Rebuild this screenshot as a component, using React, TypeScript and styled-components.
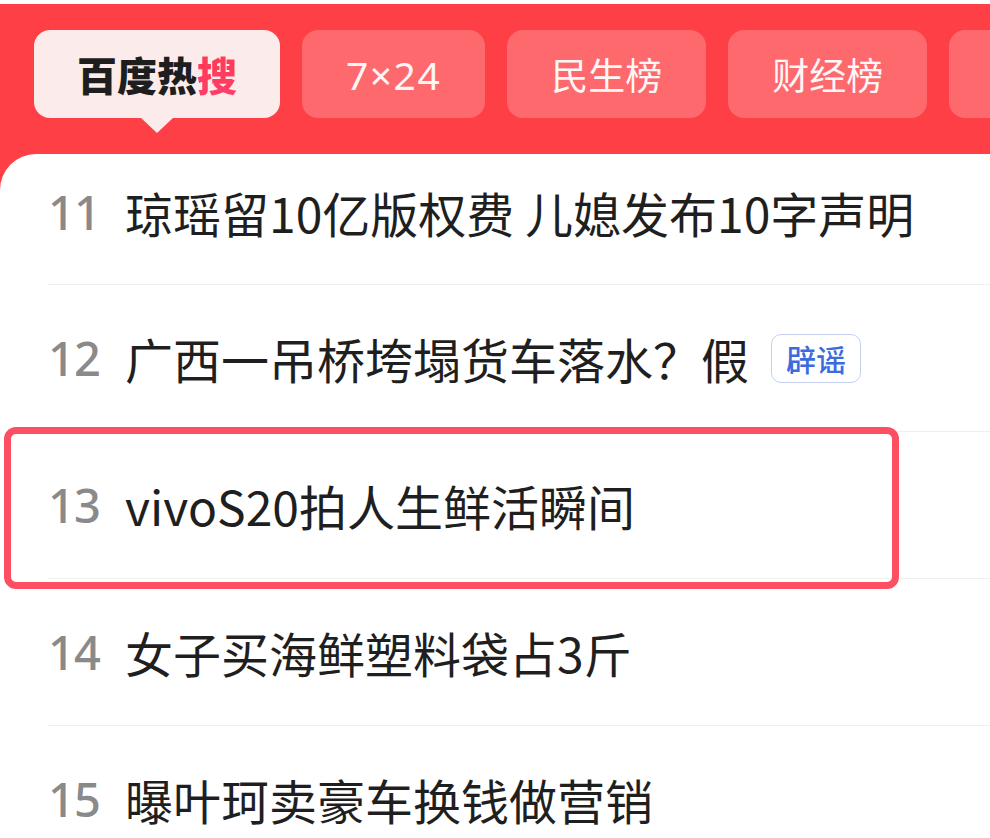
import React from 'react';
import styled, { createGlobalStyle } from 'styled-components';

const GlobalStyle = createGlobalStyle`
  html, body {
    margin: 0;
    padding: 0;
    background: #ffffff;
  }
  body {
    font-family: "Noto Sans CJK SC", "Noto Sans", sans-serif;
  }
`;

const Page = styled.div`
  width: 990px;
  height: 838px;
  padding-top: 4px;
  box-sizing: border-box;
  overflow: hidden;
  background: #ffffff;
`;

const Header = styled.div`
  background: #fe3f46;
  padding-top: 26px;
`;

const TabRow = styled.div`
  display: flex;
  gap: 22px;
  padding-left: 34px;
  height: 88px;
  white-space: nowrap;
`;

const Tab = styled.div<{ $active?: boolean; $blank?: boolean }>`
  position: relative;
  flex-shrink: 0;
  display: flex;
  align-items: center;
  justify-content: center;
  width: ${p => (p.$blank ? '200px' : 'auto')};
  padding: 0 ${p => (p.$active ? '43px' : '44px')};
  box-sizing: border-box;
  border-radius: 16px;
  background: ${p => (p.$active ? '#fcebeb' : 'rgba(255, 255, 255, 0.22)')};
  color: ${p => (p.$active ? '#1e1e1e' : '#fff6f6')};
  font-size: 37px;
  font-weight: ${p => (p.$active ? 900 : 400)};
  letter-spacing: 0;
`;

const Pointer = styled.div`
  position: absolute;
  left: 50%;
  bottom: -15px;
  width: 0;
  height: 0;
  transform: translateX(-50%);
  border-left: 17px solid transparent;
  border-right: 17px solid transparent;
  border-top: 16px solid #fcebeb;
`;

const Brand = styled.span`
  font-size: 40px;
`;

const Hot = styled.span`
  background: linear-gradient(180deg, #ff3b4a 0%, #ff3d6e 100%);
  -webkit-background-clip: text;
  background-clip: text;
  color: transparent;
`;

const Digits = styled.span`
  font-family: "Noto Sans", "Open Sans", sans-serif;
  font-size: 39px;
  letter-spacing: 1.5px;
`;

const Panel = styled.div`
  margin-top: 36px;
  background: #ffffff;
  border-top-left-radius: 36px;
`;

const List = styled.div`
  padding-left: 48px;
`;

const Row = styled.div<{ $first?: boolean }>`
  position: relative;
  display: flex;
  align-items: center;
  box-sizing: border-box;
  height: ${p => (p.$first ? '131px' : '147px')};
  padding-bottom: ${p => (p.$first ? '14px' : '0')};
  border-bottom: 1.5px solid #efefef;
`;

const Rank = styled.span`
  width: 77px;
  flex-shrink: 0;
  font-family: "Noto Sans", "Open Sans", sans-serif;
  font-size: 47px;
  font-weight: 500;
  color: #8a8a8a;
  letter-spacing: -1px;
`;

const Title = styled.span`
  font-size: 48px;
  color: #1f1f1f;
  white-space: pre;
`;

const Tag = styled.span`
  margin-left: 22px;
  display: inline-flex;
  align-items: center;
  justify-content: center;
  height: 49px;
  box-sizing: border-box;
  padding: 0 14px;
  border: 1.5px solid #c3d1ee;
  border-radius: 10px;
  color: #3c6be0;
  font-size: 30px;
  font-weight: 500;
`;

const Highlight = styled.div`
  position: absolute;
  top: -5px;
  left: -44px;
  width: 895px;
  height: 162px;
  box-sizing: border-box;
  border: 7px solid #fe4f62;
  border-radius: 12px;
  pointer-events: none;
`;

type Item = { rank: number; title: string; tag?: string; marked?: boolean };

const items: Item[] = [
  { rank: 11, title: '琼瑶留10亿版权费 儿媳发布10字声明' },
  { rank: 12, title: '广西一吊桥垮塌货车落水？假', tag: '辟谣' },
  { rank: 13, title: 'vivoS20拍人生鲜活瞬间', marked: true },
  { rank: 14, title: '女子买海鲜塑料袋占3斤' },
  { rank: 15, title: '曝叶珂卖豪车换钱做营销' },
];

const App: React.FC = () => {
  return (
    <Page>
      <GlobalStyle />
      <Header>
        <TabRow>
          <Tab $active>
            <Brand>
              百度热<Hot>搜</Hot>
            </Brand>
            <Pointer />
          </Tab>
          <Tab>
            <Digits>7×24</Digits>
          </Tab>
          <Tab>民生榜</Tab>
          <Tab>财经榜</Tab>
          <Tab $blank />
        </TabRow>
        <Panel>
          <List>
            {items.map((item, i) => (
              <Row key={item.rank} $first={i === 0}>
                <Rank>{item.rank}</Rank>
                <Title>{item.title}</Title>
                {item.tag && <Tag>{item.tag}</Tag>}
                {item.marked && <Highlight />}
              </Row>
            ))}
          </List>
        </Panel>
      </Header>
    </Page>
  );
};

export default App;
